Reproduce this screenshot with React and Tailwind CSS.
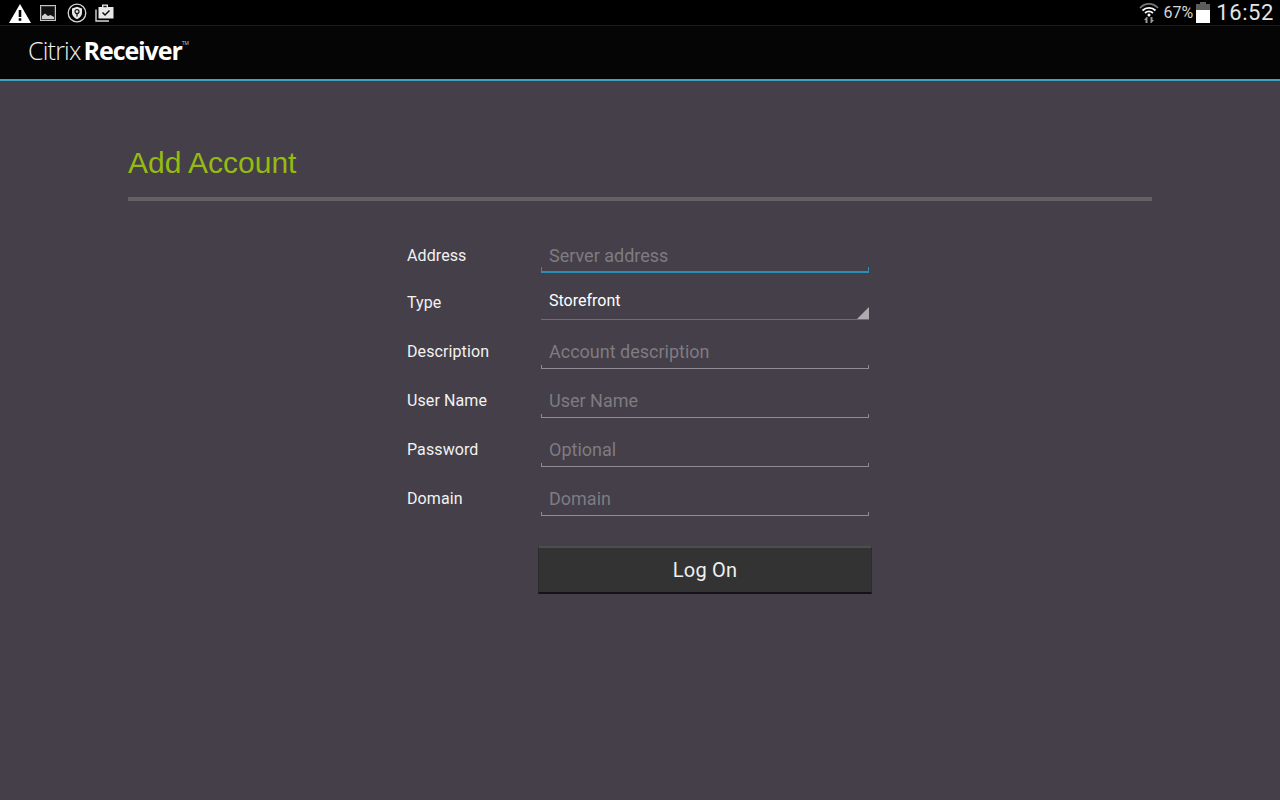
const font = { fontFamily: "Roboto, sans-serif" };

function Field({ label, placeholder, active, first }) {
  return (
    <div className={`flex items-end ${first ? "h-[48px]" : "h-[49px]"}`}>
      <div className="w-[134px] h-[34px] text-[16px] leading-[34px] text-[#f2f2f2] tracking-[0.1px]">{label}</div>
      <div className={`relative w-[328px] h-[34px] pl-[8px] text-[18px] leading-[34px] text-[#7f7b82] ${active ? "border-b-2 border-[#2a8fb3]" : "border-b border-[#8f8b92]"}`}>
        {placeholder}
        <span className={`absolute left-0 bottom-0 w-px ${active ? "h-[4px] bg-[#2a8fb3]" : "h-[3px] bg-[#8f8b92]"}`} />
        <span className={`absolute right-0 bottom-0 w-px ${active ? "h-[4px] bg-[#2a8fb3]" : "h-[3px] bg-[#8f8b92]"}`} />
      </div>
    </div>
  );
}

function StatusLeft() {
  return (
    <div className="flex items-center">
      <svg className="ml-[9px]" width="22" height="20" viewBox="0 0 22 20">
        <path d="M11 1 L22 20 L0 20 Z" fill="#fff" />
        <rect x="9.7" y="7" width="2.6" height="7" fill="#000" />
        <rect x="9.7" y="15.2" width="2.6" height="2.6" fill="#000" />
      </svg>
      <svg className="ml-[9px]" width="16" height="16" viewBox="0 0 16 16">
        <rect x="0.5" y="0.5" width="15" height="15" fill="#3a3a3a" stroke="#c4c4c4" />
        <rect x="2" y="2" width="12" height="12" fill="#111" />
        <path d="M2 14 L2 11 L5 8.5 L8 11 L10.5 10 L14 12 L14 14 Z" fill="#d0d0d0" />
      </svg>
      <svg className="ml-[11px]" width="20" height="20" viewBox="0 0 20 20">
        <circle cx="10" cy="10" r="8.8" fill="none" stroke="#d8d8d8" strokeWidth="1.3" />
        <path d="M10 3.8 L15 5.5 V10 C15 13 12.5 15.2 10 16.2 C7.5 15.2 5 13 5 10 V5.5 Z" fill="#e8e8e8" />
        <circle cx="10" cy="8.6" r="2" fill="none" stroke="#111" strokeWidth="1.2" />
        <rect x="9.4" y="10.4" width="1.2" height="3.2" fill="#111" />
      </svg>
      <svg className="ml-[8px]" width="19" height="19" viewBox="0 0 19 19">
        <path d="M1 6.5 V18 H14" fill="none" stroke="#d8d8d8" strokeWidth="1.4" />
        <path d="M3.5 4 H7 V1.5 H13 V4 H18.5 V15.5 H3.5 Z" fill="#e8e8e8" />
        <rect x="8.4" y="2.8" width="3.2" height="1.4" fill="#111" />
        <path d="M7.5 9.5 L10 12 L14.5 7.5" fill="none" stroke="#111" strokeWidth="1.5" />
      </svg>
    </div>
  );
}

function StatusRight() {
  return (
    <div className="flex items-center">
      <svg width="20" height="22" viewBox="0 0 20 22">
        <path d="M1 6 C6 0.5 14 0.5 19 6" fill="none" stroke="#777" strokeWidth="1.8" />
        <path d="M3.5 8.5 C7 5 13 5 16.5 8.5" fill="none" stroke="#fff" strokeWidth="1.8" />
        <path d="M6 11 C8.5 9 11.5 9 14 11" fill="none" stroke="#fff" strokeWidth="1.8" />
        <circle cx="10" cy="13" r="1.5" fill="#fff" />
        <path d="M8.5 15 V21 H6.5 V18 H5 L7.5 15 Z" fill="#9a9a9a" />
        <path d="M11.5 15 H13.5 V18 H15 L12.5 21 H11.5 Z" fill="#9a9a9a" />
      </svg>
      <span className="ml-[5px] text-[16px] leading-[24px] text-[#d6d6d6]">67%</span>
      <svg className="ml-[3px]" width="14" height="21" viewBox="0 0 14 21">
        <rect x="4" y="0" width="6" height="2" fill="#5c5c5c" />
        <rect x="0" y="2" width="14" height="6" fill="#5c5c5c" />
        <rect x="0" y="8" width="14" height="13" fill="#fff" />
      </svg>
      <span className="ml-[6px] mr-[6px] text-[22px] leading-[24px] text-[#e4e4e4] tracking-[0.6px]">16:52</span>
    </div>
  );
}

export default function App() {
  return (
    <div className="w-[1280px] h-[800px] overflow-hidden flex flex-col bg-[#443f48]" style={font}>
      <div className="h-[26px] bg-black border-b border-[#1c1c1c] flex items-center justify-between">
        <StatusLeft />
        <StatusRight />
      </div>
      <div className="h-[55px] bg-[#050505] border-b-2 border-[#3fa3c0] flex items-center pl-[28px] pb-[3px] text-white">
        <span className="text-[25px] font-light tracking-[-0.8px] text-[#f0f0f0]" style={{ fontFamily: "'Open Sans', sans-serif" }}>Citrix</span>
        <span className="ml-[3px] text-[25px] font-bold tracking-[-1.1px]" style={{ fontFamily: "'Open Sans', sans-serif" }}>Receiver</span>
        <span className="text-[5px] leading-none self-start mt-[15px] text-[#bbb]">TM</span>
      </div>
      <div className="flex-1 px-[128px]">
        <div className="h-[116px] pt-[60px] border-b-0">
          <h1 className="text-[30px] leading-[44px] text-[#95bb10]" style={{ fontFamily: "'Liberation Sans', sans-serif" }}>Add Account</h1>
        </div>
        <div className="h-[4px] bg-[#636066]" />
        <div className="ml-[279px] mt-[24px] w-[465px]">
          <Field first active label="Address" placeholder="Server address" />
          <div className="flex items-end h-[47px]">
            <div className="w-[134px] h-[34px] text-[16px] leading-[34px] text-[#f2f2f2] tracking-[0.1px]">Type</div>
            <div className="relative w-[328px] h-[34px] pl-[8px] text-[16px] leading-[30px] text-white border-b border-[#716d74]">
              Storefront
              <svg className="absolute right-0 bottom-0" width="12" height="12" viewBox="0 0 12 12">
                <path d="M12 0 V12 H0 Z" fill="#aeaab0" />
              </svg>
            </div>
          </div>
          <Field label="Description" placeholder="Account description" />
          <Field label="User Name" placeholder="User Name" />
          <Field label="Password" placeholder="Optional" />
          <Field label="Domain" placeholder="Domain" />
          <button className="block ml-[131px] mt-[30px] w-[334px] h-[48px] bg-[#333333] border-t-2 border-t-[#4d4d4f] border-b-2 border-b-[#141216] border-x border-x-[#2c2c2c] text-[20px] text-[#f0f0f0] tracking-[0.2px]">
            Log On
          </button>
        </div>
      </div>
    </div>
  );
}
